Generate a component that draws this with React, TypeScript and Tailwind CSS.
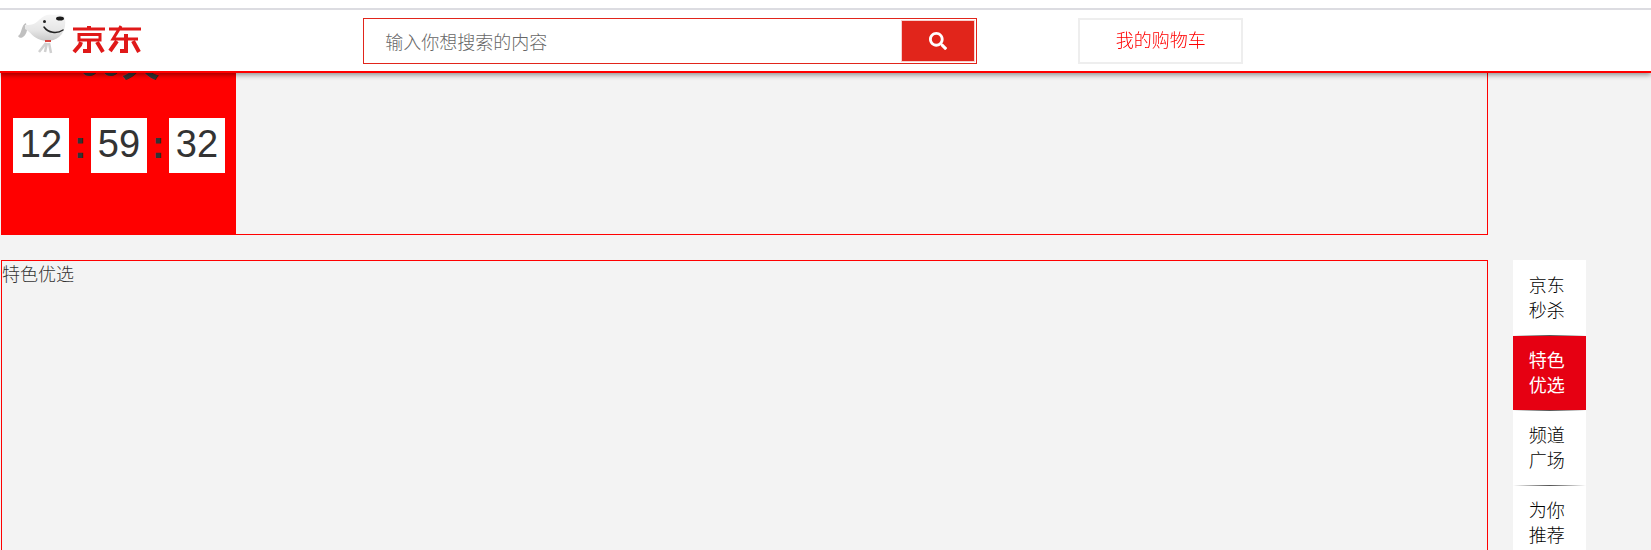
import { Fragment } from "react";
import { FaSearch } from "react-icons/fa";

const navItems = [
  { id: "seckill", lines: ["京东", "秒杀"] },
  { id: "special", lines: ["特色", "优选"] },
  { id: "channel", lines: ["频道", "广场"] },
  { id: "recommend", lines: ["为你", "推荐"] },
];

const activeId = "special";
const countdown = ["12", "59", "32"];

function Logo() {
  return (
    <a href="#home" aria-label="京东" className="ml-4 flex h-12 w-32 items-start">
      <svg viewBox="0 0 128 48" className="h-12 w-32" aria-hidden="true">
        <defs>
          <linearGradient id="dog" x1="0" y1="0" x2="0" y2="1">
            <stop offset="0" stopColor="#f6f6f6" />
            <stop offset="0.6" stopColor="#e6e6e6" />
            <stop offset="1" stopColor="#c8c8c8" />
          </linearGradient>
        </defs>
        <path d="M10 9C5 11 6 20 2 22c2 4 8 1 9-6z" fill="#c0c0c0" />
        <path
          d="M9 11c5 0 9 0 13-4C26 3 31-1 38 1c5-1 11-1 11 4 1 8-1 14-6 18-5 4-12 5-18 3-8-2-10-8-16-11z"
          fill="url(#dog)"
        />
        <ellipse cx="44" cy="4.500" rx="4" ry="2" fill="#1b1b1b" />
        <circle cx="28.500" cy="7.500" r="1.500" fill="#222" />
        <path d="M28 13c4 6 13 7 19 3" fill="none" stroke="#222" strokeWidth="1.500" strokeLinecap="round" />
        <path d="M30 29l-7 9M31 29l-2 9M33 29l2 10" stroke="#d0d0d0" strokeWidth="2.500" fill="none" />
        <path d="M29 27h6" stroke="#d8453f" strokeWidth="2" />
        <g fill="none" stroke="#e01919">
          <path strokeWidth="3" d="M57 15h32M63 20.500h21v5.500h-21zM93 15h32M105 12l-8 13h25" />
          <path strokeWidth="4" d="M73 12v4M73 27v10h-6M65 28l-1 3-6 7M81 28l6 10M110 20v17h-6M101 27l-7 10M117 27l6 11" />
        </g>
      </svg>
    </a>
  );
}

export default function App() {
  return (
    <div className="h-screen overflow-hidden bg-[#f3f3f3] font-['Noto_Sans_CJK_SC',sans-serif] text-lg font-light text-[#333]">
      <header className="fixed inset-x-0 top-0 z-10 border-b-2 border-[#f00] bg-white pt-2 shadow-[0_2px_5px_rgba(0,0,0,0.4)]">
        <div className="flex h-[63px] items-start border-t-2 border-[#dcdce1]">
          <div className="w-[22%] pt-1">
            <Logo />
          </div>
          <form role="search" className="mt-2 flex h-[46px] w-[37.2%] border border-[#e1251b] p-px" onSubmit={(e) => e.preventDefault()}>
            <input
              type="search"
              aria-label="搜索"
              placeholder="输入你想搜索的内容"
              className="min-w-0 flex-1 bg-white px-5 font-light outline-none placeholder:text-[#666]"
            />
            <button type="submit" aria-label="搜索" className="flex w-[74px] items-center justify-center border border-[#f8d0cd] bg-[#e1251b] text-white">
              <FaSearch />
            </button>
          </form>
          <a href="#cart" className="mt-2 ml-[6.1%] flex h-[46px] w-[10%] items-center justify-center border-2 border-[#eee] pb-1 text-[#f00]">
            我的购物车
          </a>
        </div>
      </header>

      <main className="flex gap-[25px] pl-px">
        <div className="w-[90.1%] shrink-0">
          <section aria-label="京东秒杀" className="border border-t-0 border-[#f00]">
            <div className="flex h-[234px] w-[234px] flex-col items-center bg-[#f00] pt-9 font-['Liberation_Sans','Noto_Sans_CJK_SC',sans-serif]">
              <h2 className="text-[38px] leading-[54px] font-bold">00天</h2>
              <div className="mt-7 flex items-center text-[38px] font-normal">
                {countdown.map((part, i) => (
                  <Fragment key={i}>
                    {i > 0 && <span className="w-[22px] text-center leading-[55px] font-bold">:</span>}
                    <span className="h-[55px] w-14 bg-white text-center leading-[52px]">{part}</span>
                  </Fragment>
                ))}
              </div>
            </div>
          </section>
          <section className="mt-[25px] h-[500px] border border-[#f00]">
            <h2 className="leading-6">特色优选</h2>
          </section>
        </div>

        <nav aria-label="楼层导航" className="mt-[260px] w-[73px] self-start bg-white pt-px text-black">
          {navItems.map((item) => (
            <Fragment key={item.id}>
              <a
                href={`#${item.id}`}
                className={
                  item.id === activeId
                    ? "flex h-[74px] flex-col justify-center bg-[#e60012] pb-0.5 pl-4 leading-[25px] font-normal text-white"
                    : "flex h-[74px] flex-col justify-center pb-0.5 pl-4 leading-[25px]"
                }
              >
                {item.lines.map((line) => (
                  <span key={line}>{line}</span>
                ))}
              </a>
              <div className="h-px bg-linear-to-r from-white via-[#555] to-white" />
            </Fragment>
          ))}
        </nav>
      </main>
    </div>
  );
}
